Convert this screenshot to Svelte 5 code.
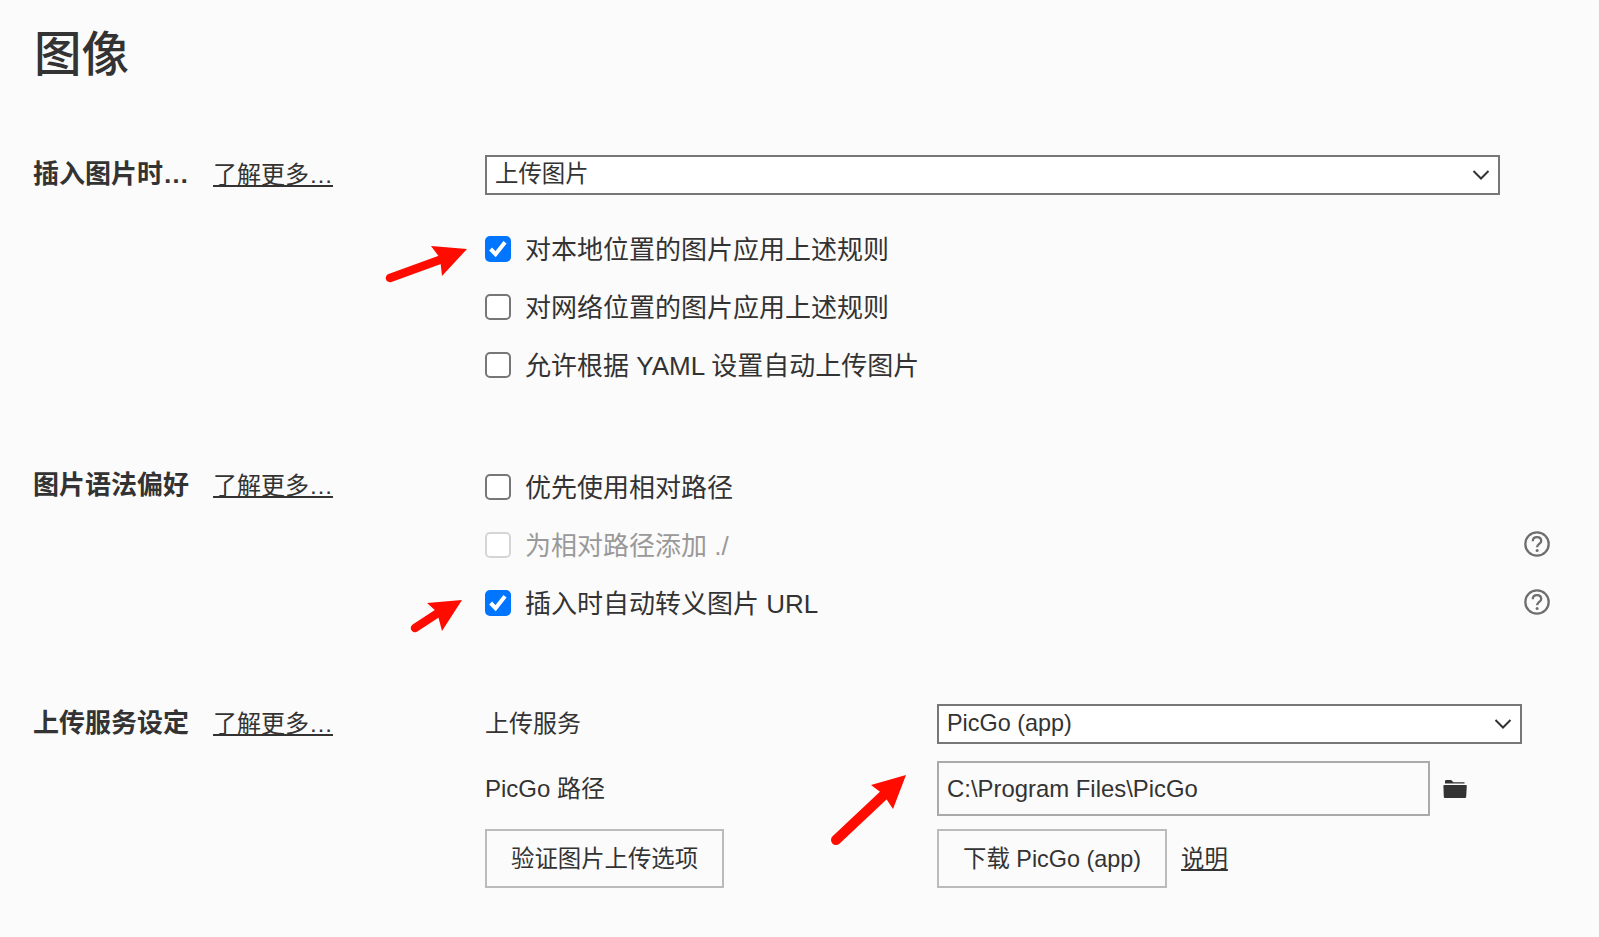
<script>
	const sections = [
		{
			title: '插入图片时…',
			select: '上传图片',
			checks: [
				{ text: '对本地位置的图片应用上述规则', checked: true },
				{ text: '对网络位置的图片应用上述规则' },
				{ text: '允许根据 YAML 设置自动上传图片' }
			]
		},
		{
			title: '图片语法偏好',
			checks: [
				{ text: '优先使用相对路径' },
				{ text: '为相对路径添加 ./', disabled: true, help: true },
				{ text: '插入时自动转义图片 URL', checked: true, help: true }
			]
		}
	];
</script>

{#snippet chevron()}
	<svg class="chevron" viewBox="0 0 18 12" width="18" height="12" aria-hidden="true">
		<path d="M1.5 2 L9 9.5 L16.5 2" fill="none" stroke="#333" stroke-width="2" />
	</svg>
{/snippet}

{#snippet help()}
	<svg class="help" viewBox="0 0 26 26" width="26" height="26" aria-hidden="true">
		<circle cx="13" cy="13" r="11.7" fill="none" stroke="#6e6e6e" stroke-width="2.3" />
		<path d="M8.8 10.2 C8.8 7.6 10.6 6.2 13 6.2 C15.5 6.2 17.2 7.7 17.2 9.9 C17.2 12.8 13.1 13 13.1 16.2" fill="none" stroke="#6e6e6e" stroke-width="2.3" />
		<circle cx="13.1" cy="19.4" r="1.5" fill="#6e6e6e" />
	</svg>
{/snippet}

<main class="page">
	<h1>图像</h1>

	{#each sections as section}
		<section class="section">
			<div class="side">
				<strong>{section.title}</strong>
				<a href="#more">了解更多…</a>
			</div>
			<div class="body">
				{#if section.select}
					<div class="select first-select">
						<span>{section.select}</span>
						{@render chevron()}
					</div>
				{/if}
				<div class="checks" class:after-select={section.select}>
					{#each section.checks as item}
						<div class="check-row" class:disabled={item.disabled}>
							<span class="box" class:checked={item.checked}>
								{#if item.checked}
									<svg viewBox="0 0 26 26" width="26" height="26" aria-hidden="true">
										<path d="M5.6 13 L10.6 18.2 L20 6.2" fill="none" stroke="#fff" stroke-width="4" />
									</svg>
								{/if}
							</span>
							<span class="check-text">{item.text}</span>
							{#if item.help}
								{@render help()}
							{/if}
						</div>
					{/each}
				</div>
			</div>
		</section>
	{/each}

	<section class="section upload">
		<div class="side">
			<strong>上传服务设定</strong>
			<a href="#more">了解更多…</a>
		</div>
		<div class="form">
			<span class="form-label">上传服务</span>
			<div class="select service-select">
				<span>PicGo (app)</span>
				{@render chevron()}
			</div>
			<span class="form-label">PicGo 路径</span>
			<div class="path-row">
				<div class="path-input">C:\Program Files\PicGo</div>
				<svg class="folder" viewBox="0 0 24 20" width="24" height="20" aria-hidden="true">
					<path d="M2 2.2 Q2 1 3.2 1 H8.2 L10.4 3.2 H21.5 V4.4 H2 Z" fill="#333" />
					<path d="M0.4 6.6 Q0.4 6 1.4 6 H23 Q23.8 6 23.8 6.8 L23.2 17.8 Q23.1 19 22 19 H1.8 Q0.8 19 0.8 17.8 Z" fill="#333" />
				</svg>
			</div>
			<div class="button-cell"><button>验证图片上传选项</button></div>
			<div class="button-cell">
				<button>下载 PicGo (app)</button>
				<a href="#about">说明</a>
			</div>
		</div>
	</section>

	<svg class="arrows" viewBox="0 0 1599 937" width="1599" height="937" aria-hidden="true">
		<g fill="#ff0b00" stroke="#ff0b00" stroke-linecap="round">
			<path d="M390 278 L445 258" stroke-width="8.5" />
			<path d="M467 249 L431 246 L440 258 L442 276 Z" stroke-width="0" />
			<path d="M415 628 L441 611" stroke-width="8.5" />
			<path d="M462 600 L427 603 L437 612 L442 631 Z" stroke-width="0" />
			<path d="M836 840 L886 793" stroke-width="10" />
			<path d="M906 775 L871 785 L883 794 L893 809 Z" stroke-width="0" />
		</g>
	</svg>
</main>

<style>
	:global(body) {
		background: #fbfbfb;
		color: #333;
		font-family: "Liberation Sans", "Noto Sans CJK SC", sans-serif;
		font-size: 26px;
	}

	.page {
		position: relative;
		box-sizing: border-box;
		height: 937px;
		padding: 21px 0 0 34px;
		overflow: hidden;
	}

	h1 {
		margin: 0 0 66px;
		font-size: 47.5px;
		font-weight: 500;
		line-height: 68px;
	}

	.section {
		display: flex;
		margin-bottom: 72px;
	}

	.side {
		display: flex;
		flex: 0 0 451px;
		align-items: baseline;
		gap: 24px;
		padding-top: 2px;
		line-height: 34px;
		margin-left: -1px;
		margin-right: 1px;
	}

	.side a {
		font-size: 24px;
	}

	a {
		color: #333;
	}

	.body {
		flex: 1;
		padding-right: 49px;
	}

	.checks {
		margin-top: -8px;
	}

	.checks.after-select {
		margin-top: 25px;
	}

	.select {
		display: flex;
		align-items: center;
		justify-content: space-between;
		box-sizing: border-box;
		height: 40px;
		padding: 0 8px;
		border: 2px solid #777;
		background: #fff;
		font-size: 23.4px;
		line-height: 30px;
	}

	.select span {
		margin-top: -2px;
	}

	.first-select {
		width: 1015px;
	}

	.check-row {
		display: flex;
		align-items: center;
		height: 58px;
	}

	.disabled {
		color: #999;
	}

	.box {
		flex: none;
		box-sizing: border-box;
		width: 26px;
		height: 26px;
		margin-right: 14px;
		border: 2px solid #777;
		border-radius: 5px;
		background: #fff;
	}

	.box.checked {
		border: 0;
		background: #0075ff;
	}

	.box svg {
		display: block;
	}

	.disabled .box {
		border-color: #d5d5d5;
	}

	.check-text {
		flex: 1;
		margin-bottom: 4px;
	}

	.help {
		flex: none;
		margin-bottom: 2px;
	}

	.form {
		display: grid;
		grid-template-columns: 452px 585px;
		grid-template-rows: 40px 55px 59px;
		row-gap: 17px;
		align-items: center;
		font-size: 24px;
	}

	.form-label {
		line-height: 34px;
	}

	.path-row {
		display: flex;
		align-items: center;
		gap: 13px;
	}

	.path-input {
		box-sizing: border-box;
		width: 493px;
		height: 55px;
		padding: 0 8px;
		border: 2px solid #aaa;
		font-size: 23.9px;
		line-height: 51px;
	}

	.button-cell {
		display: flex;
		align-items: center;
		gap: 14px;
		margin-top: -8px;
		font-size: 23.4px;
	}

	.button-cell a {
		margin-bottom: 3px;
	}

	button {
		height: 59px;
		padding: 0 24px;
		border: 2px solid #bbb;
		background: transparent;
		color: #333;
		font: inherit;
		line-height: 30px;
	}

	.arrows {
		position: absolute;
		top: 0;
		left: 0;
		pointer-events: none;
	}
</style>
